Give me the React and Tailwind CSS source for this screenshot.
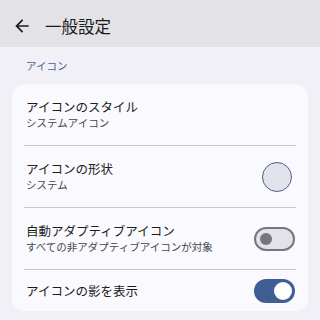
import React from "react";

const font = { fontFamily: '"Noto Sans CJK JP", "Noto Sans", sans-serif' };

function Row({ title, subtitle, right, last }) {
  return (
    <div className="flex flex-col">
      <div className={`flex items-center justify-between ${subtitle ? "h-[61px]" : "h-[41px]"}`}>
        <div className="flex flex-col pl-[2px]">
          <div className="text-[12.5px] leading-[17px] text-[#1a1c20]">{title}</div>
          {subtitle && <div className="text-[10.5px] leading-[16px] text-[#45474e]">{subtitle}</div>}
        </div>
        {right}
      </div>
      {!last && <div className="h-px bg-[#c9c9d0]" />}
    </div>
  );
}

function SwitchOff() {
  return (
    <div className="w-[41px] h-[24px] rounded-full border-2 border-[#74777f] bg-[#e2e2e8] flex items-center pl-[4px] mr-px">
      <div className="w-[12px] h-[12px] rounded-full bg-[#74777f]" />
    </div>
  );
}

function SwitchOn() {
  return (
    <div className="w-[41px] h-[24px] rounded-full bg-[#3f5f94] flex items-center justify-end pr-[3px] mr-px">
      <div className="w-[18px] h-[18px] rounded-full bg-white" />
    </div>
  );
}

export default function App() {
  return (
    <div className="w-[320px] h-[320px] overflow-hidden bg-[#f0f0f6] flex flex-col" style={font}>
      <div className="h-[47px] bg-[#e3e2e7] flex items-center pl-[12px] pt-[5px] shrink-0">
        <svg width="20" height="20" viewBox="0 0 24 24">
          <path d="M20 11H7.83l5.59-5.59L12 4l-8 8 8 8 1.41-1.41L7.83 13H20v-2z" fill="#1a1c20" />
        </svg>
        <div className="ml-[13px] text-[16.5px] text-[#1a1c20] leading-none">一般設定</div>
      </div>
      <div className="pl-[26px] pt-[11px] h-[37px] text-[10.5px] text-[#4a6294] leading-[16px]">アイコン</div>
      <div className="mx-3 rounded-[13px] bg-[#f9f9fe] px-3">
        <Row title="アイコンのスタイル" subtitle="システムアイコン" />
        <Row
          title="アイコンの形状"
          subtitle="システム"
          right={<div className="w-[30px] h-[30px] rounded-full border-[1.5px] border-[#4c5f8c] bg-[#e2e2ea] mr-[4px]" />}
        />
        <Row title="自動アダプティブアイコン" subtitle="すべての非アダプティブアイコンが対象" right={<SwitchOff />} />
        <Row title="アイコンの影を表示" right={<SwitchOn />} last />
      </div>
    </div>
  );
}
